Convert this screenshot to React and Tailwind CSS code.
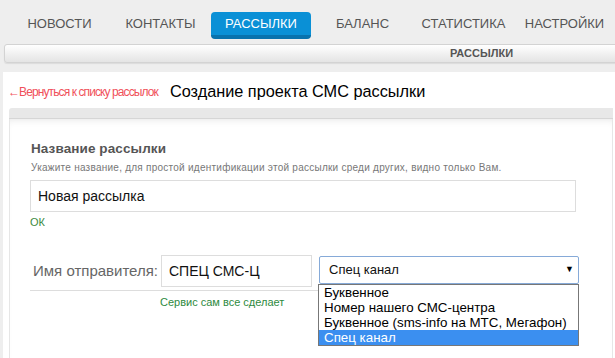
import React from "react";

const NAV = ["НОВОСТИ", "КОНТАКТЫ", "РАССЫЛКИ", "БАЛАНС", "СТАТИСТИКА", "НАСТРОЙКИ"];

export default function App() {
  return (
    <div className="w-[615px] h-[358px] overflow-hidden bg-[#eeeeee] font-['Liberation_Sans',Arial,sans-serif]">
      {/* top nav */}
      <div className="grid grid-cols-6 pl-[9px] pt-[12px]">
        {NAV.map((n, i) =>
          i === 2 ? (
            <div
              key={n}
              className="h-[27px] leading-[23px] text-center text-[13px] text-white bg-[#0a90d6] border-b-[4px] border-[#0872ad] rounded-[4px] mr-[1px]"
            >
              {n}
            </div>
          ) : (
            <div key={n} className="h-[27px] leading-[23px] text-center text-[13px] text-[#555555]">
              {n}
            </div>
          )
        )}
      </div>

      {/* secondary bar */}
      <div className="mt-[5px] ml-[4px] -mr-[4px] h-[19px] border border-[#d3d3d3] rounded-[3px] bg-gradient-to-b from-white to-[#e4e4e4] shadow-[0_1px_1px_rgba(0,0,0,0.08)] flex items-center pl-[445px]">
        <span className="text-[11px] font-bold text-[#555555]">РАССЫЛКИ</span>
      </div>

      {/* content */}
      <div className="mt-[9px] ml-[3px] bg-white h-[300px]">
        <div className="h-[36px] pt-[3px] flex items-center pl-[5px]">
          <span className="text-[12px] text-[#f0505a] tracking-[-0.9px]">←Вернуться к списку рассылок</span>
          <span className="ml-[12px] text-[16.3px] text-black">Создание проекта СМС рассылки</span>
        </div>

        <div className="ml-[6px] mr-[2px]">
          <div className="h-[11px] bg-[#e8e8e8] border-b border-[#d6d6d6] rounded-tl-[3px]" />
          <div className="border-l border-r border-[#e6e6e6] h-[240px] pl-[20px] shadow-[inset_0_6px_8px_-6px_rgba(0,0,0,0.12)]">
            <div className="pt-[22px] text-[13.5px] leading-[16px] font-bold text-[#555555] tracking-[0.1px] pl-[1px]">
              Название рассылки
            </div>
            <div className="mt-[5px] text-[10px] leading-[12px] text-[#777777] tracking-[0.25px] pl-[1px]">
              Укажите название, для простой идентификации этой рассылки среди других, видно только Вам.
            </div>
            <div className="mt-[6px] w-[546px] h-[32px] border border-[#dddddd] flex items-center pl-[7px] text-[14px] text-[#111111]">
              Новая рассылка
            </div>
            <div className="mt-[4px] text-[11px] leading-[13px] text-[#3d8a3d]">ОК</div>

            <div className="mt-[26px] w-[549px] pb-[3px] border-b border-[#dddddd] flex items-start">
              <div className="h-[32px] flex items-center pl-[3px] w-[131px] text-[15px] text-[#666666]">
                Имя отправителя:
              </div>
              <div className="w-[151px] h-[32px] border border-[#dddddd] flex items-center pl-[7px] text-[14px] text-[#111111]">
                СПЕЦ СМС-Ц
              </div>
              <div className="relative ml-[7px] mt-[1px] w-[260px]">
                <div className="h-[28px] border border-[#86aad8] rounded-[2px] flex items-center justify-between pl-[9px] pr-[4px] text-[13px] text-[#111111] bg-white">
                  <span>Спец канал</span>
                  <span className="text-[9px] text-black">▼</span>
                </div>
                <div className="absolute left-[-1px] top-full w-[261px] border border-[#777777] bg-white text-[13.33px] leading-[15px] text-black z-10">
                  <div className="pl-[5px]">Буквенное</div>
                  <div className="pl-[5px]">Номер нашего СМС-центра</div>
                  <div className="pl-[5px]">Буквенное (sms-info на МТС, Мегафон)</div>
                  <div className="pl-[5px] bg-[#3b8ff0] text-white">Спец канал</div>
                </div>
              </div>
            </div>
            <div className="mt-[5px] pl-[130px] text-[11px] leading-[13px] text-[#2e8a3e]">
              Сервис сам все сделает
            </div>
          </div>
        </div>
      </div>
    </div>
  );
}
